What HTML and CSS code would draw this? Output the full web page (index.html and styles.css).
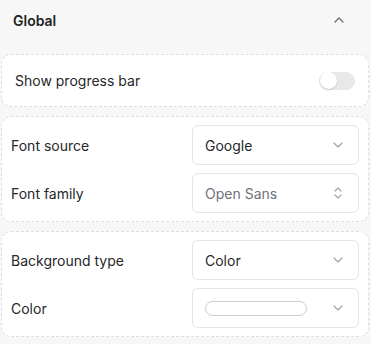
FILE: index.html
```html
<!DOCTYPE html>
<html>
<head>
<meta charset="utf-8">
<link rel="stylesheet" href="styles.css">
</head>
<body>
<div class="panel">
  <div class="header">
    <span class="title">Global</span>
    <svg class="collapse" width="10" height="6" viewBox="0 0 10 6"><path d="M1 5 L5 1 L9 5" fill="none" stroke="#6b6b6b" stroke-width="1.3" stroke-linecap="round" stroke-linejoin="round"/></svg>
  </div>
  <div class="cards">
    <div class="card card-toggle">
      <span class="label">Show progress bar</span>
      <span class="toggle"><span class="knob"></span></span>
    </div>
    <div class="card card-grid">
      <span class="label">Font source</span>
      <div class="select"><span class="value">Google</span>
        <svg class="chev" width="10" height="6" viewBox="0 0 10 6"><path d="M1 1 L5 5 L9 1" fill="none" stroke="#a3a3a3" stroke-width="1.2" stroke-linecap="round" stroke-linejoin="round"/></svg>
      </div>
      <span class="label">Font family</span>
      <div class="select"><span class="value muted">Open Sans</span>
        <svg class="updown" width="10" height="14" viewBox="0 0 10 14"><path d="M2 5 L5 2 L8 5 M2 9 L5 12 L8 9" fill="none" stroke="#a3a3a3" stroke-width="1.2" stroke-linecap="round" stroke-linejoin="round"/></svg>
      </div>
    </div>
    <div class="card card-grid">
      <span class="label">Background type</span>
      <div class="select"><span class="value">Color</span>
        <svg class="chev" width="10" height="6" viewBox="0 0 10 6"><path d="M1 1 L5 5 L9 1" fill="none" stroke="#a3a3a3" stroke-width="1.2" stroke-linecap="round" stroke-linejoin="round"/></svg>
      </div>
      <span class="label">Color</span>
      <div class="select"><span class="swatch"></span>
        <svg class="chev" width="10" height="6" viewBox="0 0 10 6"><path d="M1 1 L5 5 L9 1" fill="none" stroke="#a3a3a3" stroke-width="1.2" stroke-linecap="round" stroke-linejoin="round"/></svg>
      </div>
    </div>
  </div>
</div>
</body>
</html>
```
FILE: styles.css
```css
html, body {
  margin: 0;
  padding: 0;
}
body {
  background: #f7f7f7;
  font-family: Inter, "Liberation Sans", sans-serif;
  color: #27272a;
  width: 371px;
  height: 344px;
  overflow: hidden;
}
.panel {
  display: flex;
  flex-direction: column;
}
.header {
  height: 40px;
  display: flex;
  align-items: center;
  justify-content: space-between;
  padding: 0 27px 0 13px;
  margin-bottom: 14px;
}
.title {
  font-size: 14px;
  font-weight: 600;
  color: #222;
}
.collapse {
  display: block;
}
.cards {
  display: flex;
  flex-direction: column;
  gap: 9px;
  padding: 0 2px 0 1px;
}
.card {
  background: #fff;
  border: 1px dashed #dedede;
  border-radius: 10px;
}
.card-toggle {
  height: 51px;
  display: flex;
  align-items: center;
  justify-content: space-between;
  padding: 0 13px 0 13px;
}
.label {
  font-size: 14px;
  color: #27272a;
}
.toggle {
  width: 36px;
  height: 18px;
  border-radius: 9px;
  background: #e8e8e8;
  display: flex;
  align-items: center;
  padding: 0 1px;
  box-sizing: border-box;
}
.knob {
  width: 17px;
  height: 17px;
  border-radius: 50%;
  background: #fff;
  box-shadow: 0 1px 2px rgba(0,0,0,0.15);
}
.card-grid {
  display: grid;
  grid-template-columns: 1fr 167px;
  row-gap: 8px;
  align-items: center;
  padding: 8px 9px 8px 9px;
}
.select {
  height: 40px;
  box-sizing: border-box;
  border: 1px solid #e5e5e5;
  border-radius: 6px;
  display: flex;
  align-items: center;
  justify-content: space-between;
  padding: 0 15px 0 12px;
}
.value {
  font-size: 14px;
  color: #27272a;
}
.value.muted {
  color: #71717a;
}
.chev, .updown {
  display: block;
}
.swatch {
  width: 102px;
  height: 15px;
  box-sizing: border-box;
  border: 1px solid #cfcfcf;
  border-radius: 8px;
  background: #fff;
}
```
